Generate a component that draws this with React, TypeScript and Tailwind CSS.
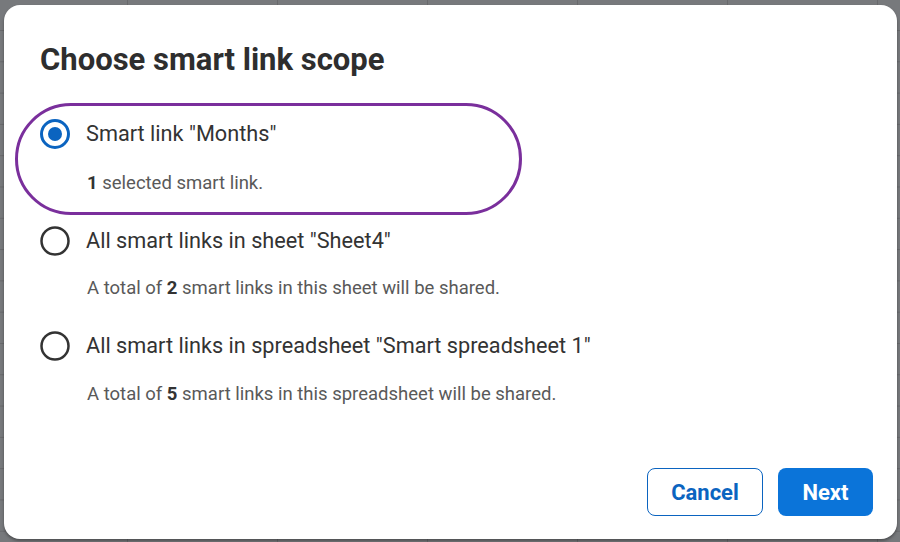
import React from "react";

const FONT = "font-['Roboto','Liberation_Sans',sans-serif]";

function Radio({ checked }: { checked: boolean }) {
  return (
    <svg width="30" height="30" viewBox="0 0 30 30" className="shrink-0">
      <circle
        cx="15"
        cy="15"
        r="13.5"
        fill="none"
        stroke={checked ? "#0b64c0" : "#333333"}
        strokeWidth={checked ? 3 : 2.5}
      />
      {checked && <circle cx="15" cy="15" r="7" fill="#0b64c0" />}
    </svg>
  );
}

type Scope = {
  label: string;
  pre: string;
  count: string;
  post: string;
};

const SCOPES: Scope[] = [
  { label: 'Smart link "Months"', pre: "", count: "1", post: " selected smart link." },
  { label: 'All smart links in sheet "Sheet4"', pre: "A total of ", count: "2", post: " smart links in this sheet will be shared." },
  {
    label: 'All smart links in spreadsheet "Smart spreadsheet 1"',
    pre: "A total of ",
    count: "5",
    post: " smart links in this spreadsheet will be shared.",
  },
];

function Description({ s }: { s: Scope }) {
  return (
    <p className="pl-[47px] text-[18.5px] leading-[24px] text-[#595959]">
      {s.pre}
      <span className="font-bold text-[#333]">{s.count}</span>
      {s.post}
    </p>
  );
}

function OptionRow({ s, checked }: { s: Scope; checked: boolean }) {
  return (
    <div className="flex items-center gap-[16px] h-[30px]">
      <Radio checked={checked} />
      <span className="text-[21.7px] leading-[30px] text-[#333]">{s.label}</span>
    </div>
  );
}

export default function App() {
  return (
    <div
      className={`${FONT} w-[900px] h-[542px] overflow-hidden bg-[#77797c] bg-[linear-gradient(to_right,#68696c_1px,transparent_1px),linear-gradient(to_bottom,#68696c_1px,transparent_1px)] bg-[size:150px_31.3px] bg-[position:127px_30px] pt-[5px] pl-[4px]`}
    >
      <div className="w-[893px] h-[534px] bg-white rounded-[16px] shadow-[0_2px_3px_rgba(0,0,0,0.35)] flex flex-col">
        <div className="px-[36px] pt-[37px]">
          <h1 className="text-[31px] leading-[36px] font-bold text-[#2e2e2e]">Choose smart link scope</h1>

          {/* selected scope, highlighted */}
          <div className="mt-[25px] -ml-[25px] w-[507px] h-[112px] border-[3px] border-[#7a2f9c] rounded-[56px] pl-[22px]">
            <div className="mt-[13px]">
              <OptionRow s={SCOPES[0]} checked />
            </div>
            <div className="mt-[22px]">
              <Description s={SCOPES[0]} />
            </div>
          </div>

          <div className="mt-[11px]">
            <OptionRow s={SCOPES[1]} checked={false} />
          </div>
          <div className="mt-[20px]">
            <Description s={SCOPES[1]} />
          </div>

          <div className="mt-[31px]">
            <OptionRow s={SCOPES[2]} checked={false} />
          </div>
          <div className="mt-[21px]">
            <Description s={SCOPES[2]} />
          </div>
        </div>

        <div className="mt-auto flex justify-end gap-[15px] pr-[24px] pb-[23px]">
          <button className="w-[116px] h-[48px] rounded-[8px] border border-[#0b64c0] text-[#0b64c0] text-[22px] font-bold bg-white">
            Cancel
          </button>
          <button className="w-[95px] h-[48px] rounded-[8px] bg-[#0b74d9] text-white text-[22px] font-bold">
            Next
          </button>
        </div>
      </div>
    </div>
  );
}
